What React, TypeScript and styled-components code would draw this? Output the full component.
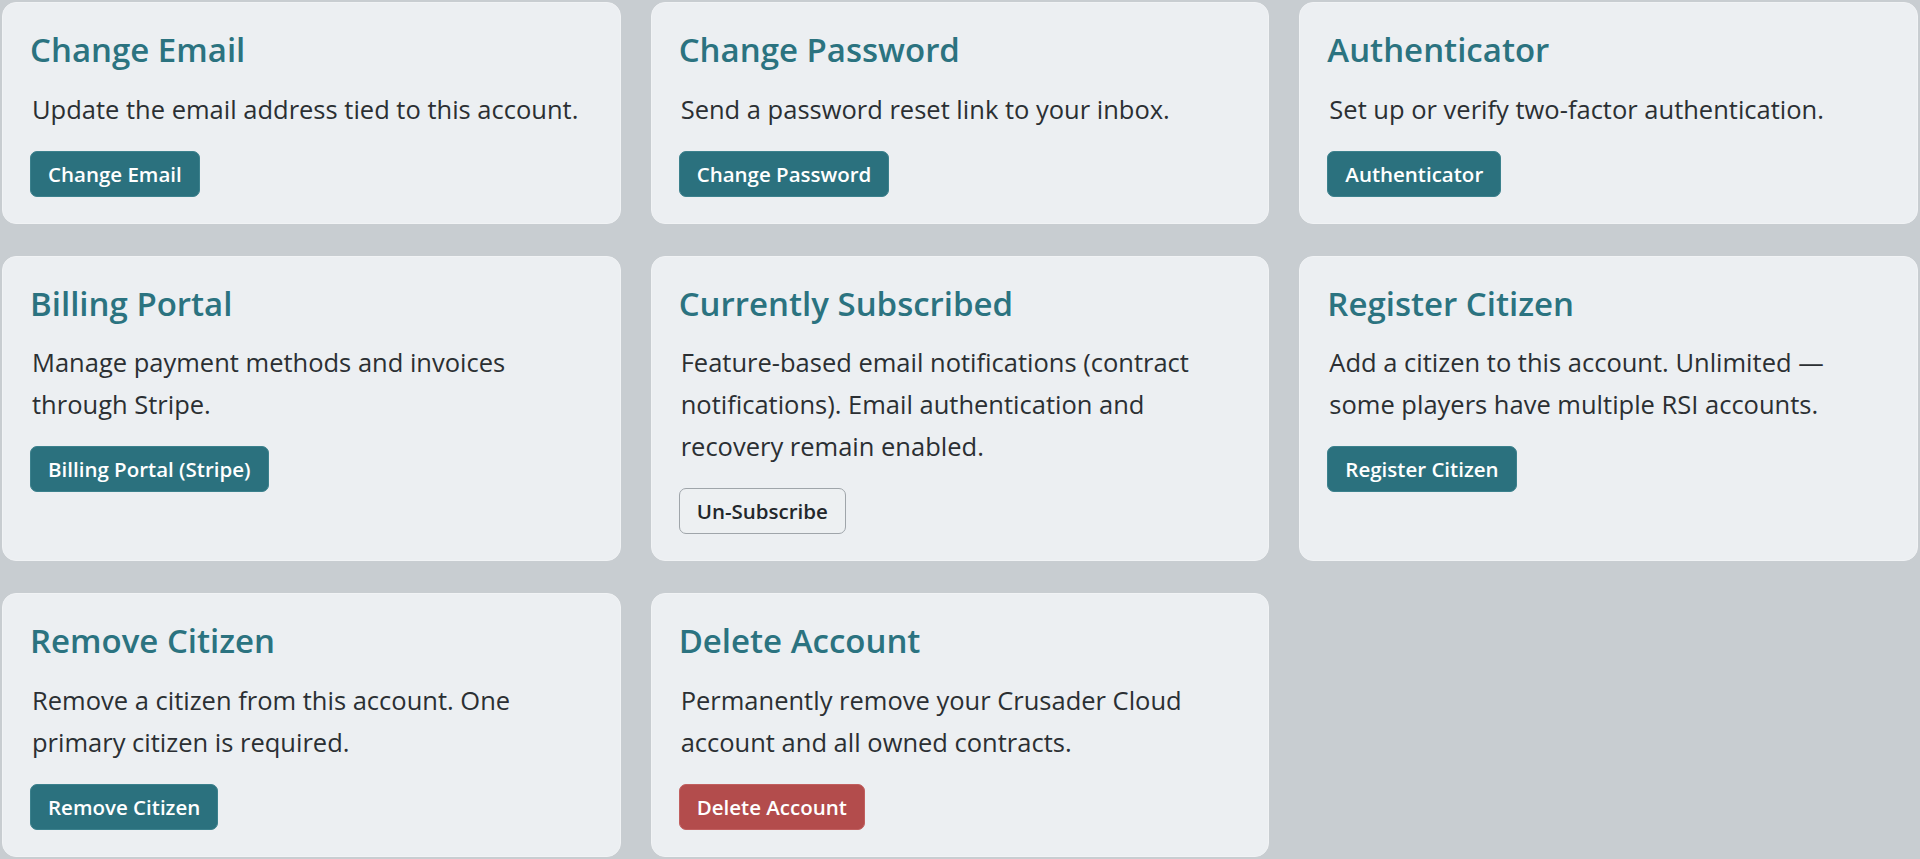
import React from "react";
import styled, { createGlobalStyle } from "styled-components";

const GlobalStyle = createGlobalStyle`
  html, body {
    margin: 0;
    padding: 0;
    background: #c8cdd1;
  }
  body {
    font-family: "Open Sans", "Noto Sans", "Liberation Sans", sans-serif;
    color: #2b2f33;
  }
`;

type Variant = "primary" | "outline" | "danger";

const Page = styled.main`
  display: grid;
  grid-template-columns: repeat(3, 1fr);
  gap: 32px 30px;
  padding: 2px;
  min-height: 859px;
  box-sizing: border-box;
  align-content: start;
`;

const Card = styled.section`
  background: #eceff2;
  border: 1px solid #f1f3f5;
  border-radius: 14px;
  padding: 27px 27px 26px;
  display: flex;
  flex-direction: column;
  align-items: flex-start;
`;

const CardTitle = styled.h3`
  margin: 0;
  font-size: 33px;
  line-height: 1.2;
  font-weight: 600;
  color: #2b7380;
`;

const CardText = styled.p`
  margin: 18px 0 0;
  padding-left: 2px;
  font-size: 25.5px;
  line-height: 42px;
  color: #2b2f33;
`;

const palette: Record<Variant, { bg: string; border: string; color: string }> = {
  primary: { bg: "#2b717e", border: "#3c818d", color: "#ffffff" },
  danger: { bg: "#b34c4c", border: "#c15f5f", color: "#ffffff" },
  outline: { bg: "#edf0f2", border: "#9fa5aa", color: "#23272b" },
};

const ActionButton = styled.button<{ $variant: Variant }>`
  margin-top: 21px;
  height: 46px;
  padding: 0 17px;
  border-radius: 7px;
  border: 1px solid ${(p) => palette[p.$variant].border};
  background: ${(p) => palette[p.$variant].bg};
  color: ${(p) => palette[p.$variant].color};
  font-family: inherit;
  font-size: 20.5px;
  font-weight: 600;
  line-height: 30px;
  cursor: pointer;
`;

const cards: { title: string; text: string; action: string; variant: Variant }[] = [
  {
    title: "Change Email",
    text: "Update the email address tied to this account.",
    action: "Change Email",
    variant: "primary",
  },
  {
    title: "Change Password",
    text: "Send a password reset link to your inbox.",
    action: "Change Password",
    variant: "primary",
  },
  {
    title: "Authenticator",
    text: "Set up or verify two-factor authentication.",
    action: "Authenticator",
    variant: "primary",
  },
  {
    title: "Billing Portal",
    text: "Manage payment methods and invoices through Stripe.",
    action: "Billing Portal (Stripe)",
    variant: "primary",
  },
  {
    title: "Currently Subscribed",
    text: "Feature-based email notifications (contract notifications). Email authentication and recovery remain enabled.",
    action: "Un-Subscribe",
    variant: "outline",
  },
  {
    title: "Register Citizen",
    text: "Add a citizen to this account. Unlimited \u2014 some players have multiple RSI accounts.",
    action: "Register Citizen",
    variant: "primary",
  },
  {
    title: "Remove Citizen",
    text: "Remove a citizen from this account. One primary citizen is required.",
    action: "Remove Citizen",
    variant: "primary",
  },
  {
    title: "Delete Account",
    text: "Permanently remove your Crusader Cloud account and all owned contracts.",
    action: "Delete Account",
    variant: "danger",
  },
];

export default function App() {
  return (
    <>
      <GlobalStyle />
      <Page>
        {cards.map((c) => (
          <Card key={c.title}>
            <CardTitle>{c.title}</CardTitle>
            <CardText>{c.text}</CardText>
            <ActionButton $variant={c.variant}>{c.action}</ActionButton>
          </Card>
        ))}
      </Page>
    </>
  );
}
